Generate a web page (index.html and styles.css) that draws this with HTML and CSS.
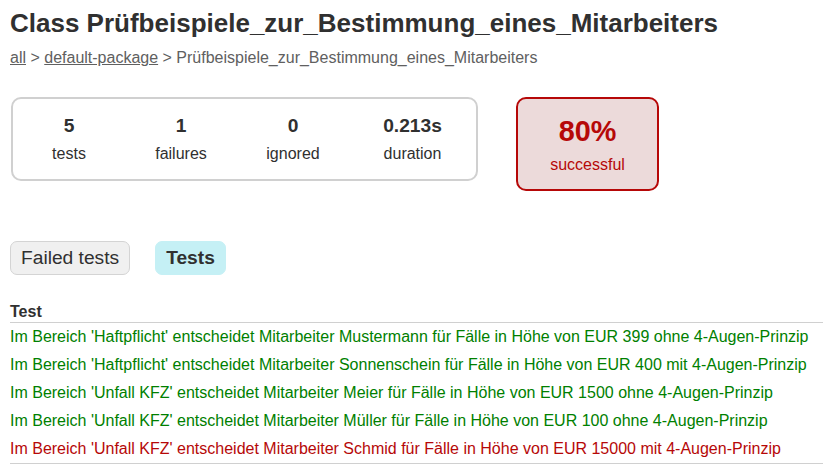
FILE: index.html
```html
<!DOCTYPE html>
<html>
<head>
<meta charset="utf-8">
<title>Test results - Class Prüfbeispiele_zur_Bestimmung_eines_Mitarbeiters</title>
<link rel="stylesheet" href="styles.css">
</head>
<body>
<div class="content">
  <h1 class="title">Class Prüfbeispiele_zur_Bestimmung_eines_Mitarbeiters</h1>
  <div class="breadcrumbs">
    <a href="#">all</a> &gt; <a href="#">default-package</a> &gt; Prüfbeispiele_zur_Bestimmung_eines_Mitarbeiters
  </div>
  <div class="summary">
    <div class="summary-group">
      <div class="info-box">
        <p class="counter">5</p>
        <p>tests</p>
      </div>
      <div class="info-box">
        <p class="counter">1</p>
        <p>failures</p>
      </div>
      <div class="info-box">
        <p class="counter">0</p>
        <p>ignored</p>
      </div>
      <div class="info-box info-box-wide">
        <p class="counter">0.213s</p>
        <p>duration</p>
      </div>
    </div>
    <div class="success-rate">
      <p class="percent">80%</p>
      <p>successful</p>
    </div>
  </div>
  <ul class="tab-links">
    <li class="tab-link"><a href="#">Failed tests</a></li>
    <li class="tab-link tab-link-selected"><a href="#">Tests</a></li>
  </ul>
  <div class="tab">
    <table class="test-table">
      <thead>
        <tr><th>Test</th></tr>
      </thead>
      <tbody>
        <tr><td class="passed">Im Bereich 'Haftpflicht' entscheidet Mitarbeiter Mustermann für Fälle in Höhe von EUR 399 ohne 4-Augen-Prinzip</td></tr>
        <tr><td class="passed">Im Bereich 'Haftpflicht' entscheidet Mitarbeiter Sonnenschein für Fälle in Höhe von EUR 400 mit 4-Augen-Prinzip</td></tr>
        <tr><td class="passed">Im Bereich 'Unfall KFZ' entscheidet Mitarbeiter Meier für Fälle in Höhe von EUR 1500 ohne 4-Augen-Prinzip</td></tr>
        <tr><td class="passed">Im Bereich 'Unfall KFZ' entscheidet Mitarbeiter Müller für Fälle in Höhe von EUR 100 ohne 4-Augen-Prinzip</td></tr>
        <tr><td class="failed">Im Bereich 'Unfall KFZ' entscheidet Mitarbeiter Schmid für Fälle in Höhe von EUR 15000 mit 4-Augen-Prinzip</td></tr>
      </tbody>
    </table>
  </div>
</div>
</body>
</html>
```

FILE: styles.css
```css
html, body {
  margin: 0;
  padding: 0;
  overflow: hidden;
}

body {
  font-family: "Liberation Sans", Arial, Helvetica, sans-serif;
  font-size: 16px;
  color: #303030;
  background: #ffffff;
}

a, a:visited {
  color: #303030;
}

.content {
  padding: 8px 0 0 10px;
}

.title {
  font-size: 26px;
  font-weight: bold;
  margin: 0 0 10px 0;
  white-space: nowrap;
}

.breadcrumbs,
.breadcrumbs a {
  color: #606060;
}

.summary {
  display: flex;
  align-items: flex-start;
  margin: 30px 0 40px 1px;
}

.summary-group {
  display: flex;
  border: solid 2px #d0d0d0;
  border-radius: 10px;
}

.info-box {
  width: 112px;
  padding: 16px 0;
  text-align: center;
}

.info-box-wide {
  width: 127px;
}

.info-box p,
.success-rate p {
  margin: 0;
}

.counter {
  font-size: 19.2px;
  font-weight: bold;
  margin-bottom: 8px !important;
}

.success-rate {
  width: 139px;
  margin-left: 38px;
  padding: 16px 0 15px 0;
  text-align: center;
  border: solid 2px #b60808;
  border-radius: 10px;
  background-color: #ecdada;
  color: #b60808;
}

.percent {
  font-size: 28.8px;
  font-weight: bold;
  margin-bottom: 8px !important;
}

.tab-links {
  display: flex;
  list-style: none;
  margin: 0 0 16px 0;
  padding: 10px 0 10px 0;
}

.tab-link {
  padding: 5px 10px;
  margin-right: 25px;
  border: solid 1px #d4d4d4;
  border-radius: 7px;
  background-color: #f0f0f0;
}

.tab-link a {
  display: block;
  font-size: 19.2px;
  text-decoration: none;
  color: #303030;
}

.tab-link-selected {
  background-color: #c5f0f5;
  border-color: #c5f0f5;
}

.tab-link-selected a {
  font-weight: bold;
}

.tab {
  padding-top: 2px;
}

.test-table {
  width: 100%;
  border-collapse: collapse;
  border-bottom: solid 1px #d0d0d0;
}

.test-table th {
  text-align: left;
  white-space: nowrap;
  padding: 0 0 1px 0;
  border-bottom: solid 1px #d0d0d0;
}

.test-table td {
  white-space: nowrap;
  padding: 5px 0;
}

.passed {
  color: #008000;
}

.failed {
  color: #b60808;
}
```
